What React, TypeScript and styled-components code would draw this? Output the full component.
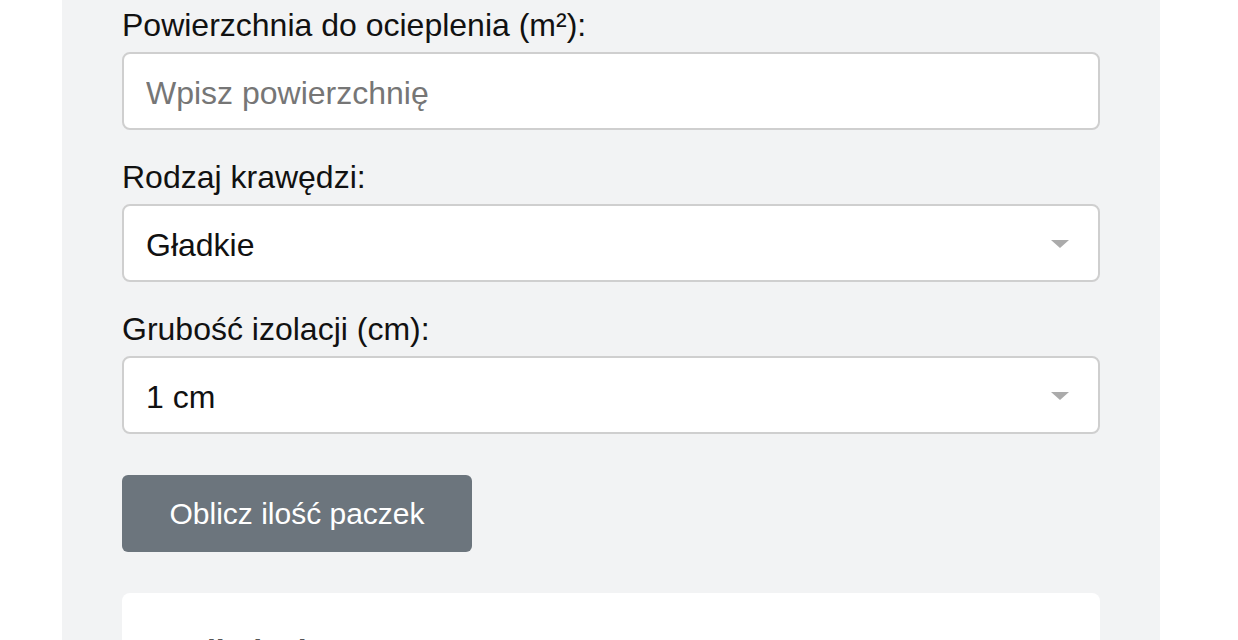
import styled, { createGlobalStyle } from "styled-components";

const GlobalStyle = createGlobalStyle`
  html, body {
    margin: 0;
    padding: 0;
    background: #ffffff;
    font-family: "Liberation Sans", Arial, sans-serif;
    overflow: hidden;
  }
`;

const Panel = styled.div`
  margin-left: 62px;
  width: 1098px;
  min-height: 700px;
  box-sizing: border-box;
  padding: 4px 60px 0;
  background: #f2f3f4;
`;

const Group = styled.div`
  margin-bottom: 26px;
`;

const Label = styled.label`
  display: block;
  font-size: 32px;
  line-height: 42px;
  margin-bottom: 6px;
  color: #111;
`;

const Field = styled.input`
  display: block;
  width: 100%;
  height: 78px;
  box-sizing: border-box;
  padding: 4px 22px 0;
  border: 2px solid #cfcfcf;
  border-radius: 8px;
  background: #fff;
  font-family: inherit;
  font-size: 32px;
  color: #111;
  outline: none;

  &::placeholder {
    color: #767676;
  }
`;

const SelectWrap = styled.div`
  position: relative;
`;

const Select = styled.select`
  display: block;
  width: 100%;
  height: 78px;
  box-sizing: border-box;
  padding: 4px 22px 0;
  border: 2px solid #cfcfcf;
  border-radius: 8px;
  background: #fff;
  font-family: inherit;
  font-size: 32px;
  color: #111;
  appearance: none;
  outline: none;
`;

const Caret = styled.span`
  position: absolute;
  right: 31px;
  top: 36px;
  width: 0;
  height: 0;
  border-left: 9px solid transparent;
  border-right: 9px solid transparent;
  border-top: 8px solid #ababab;
  pointer-events: none;
`;

const Button = styled.button`
  display: block;
  margin-top: 41px;
  width: 350px;
  height: 77px;
  border: none;
  border-radius: 6px;
  background: #6c757d;
  color: #fff;
  font-family: inherit;
  font-size: 30px;
  cursor: pointer;
`;

const Card = styled.div`
  margin-top: 41px;
  padding: 39px 44px;
  background: #fff;
  border-radius: 8px;
  min-height: 200px;
`;

const CardTitle = styled.h3`
  margin: 0;
  font-size: 32px;
  line-height: 1.2;
  font-weight: bold;
  color: #555;
`;

export default function App() {
  return (
    <>
      <GlobalStyle />
      <Panel>
        <Group>
          <Label>Powierzchnia do ocieplenia (m²):</Label>
          <Field type="number" placeholder="Wpisz powierzchnię" />
        </Group>
        <Group>
          <Label>Rodzaj krawędzi:</Label>
          <SelectWrap>
            <Select defaultValue="gladkie">
              <option value="gladkie">Gładkie</option>
              <option value="frezowane">Frezowane</option>
            </Select>
            <Caret />
          </SelectWrap>
        </Group>
        <Group>
          <Label>Grubość izolacji (cm):</Label>
          <SelectWrap>
            <Select defaultValue="1">
              <option value="1">1 cm</option>
              <option value="2">2 cm</option>
              <option value="3">3 cm</option>
            </Select>
            <Caret />
          </SelectWrap>
        </Group>
        <Button>Oblicz ilość paczek</Button>
        <Card>
          <CardTitle>Kalkulacja</CardTitle>
        </Card>
      </Panel>
    </>
  );
}
